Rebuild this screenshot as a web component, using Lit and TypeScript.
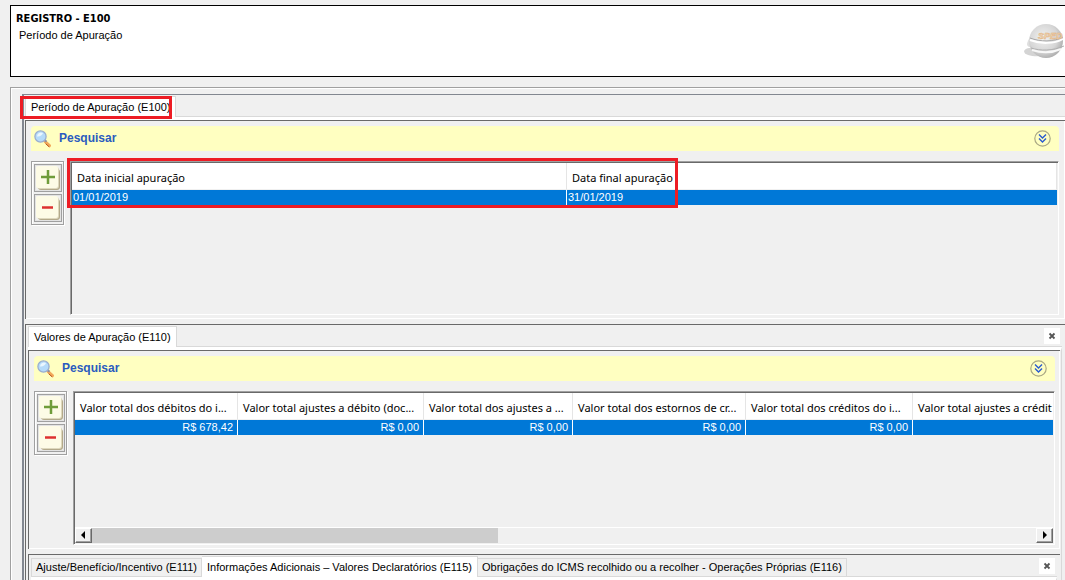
import { LitElement, html, css, svg } from "lit";
import { customElement, property } from "lit/decorators.js";

interface Column {
  title: string;
  width?: number;
}

const MAGNIFIER = html`
  <svg class="lens" viewBox="0 0 18 18" aria-hidden="true">
    <path d="M11 11.5l4.500 4.200" stroke="#f2a95a" stroke-width="3" stroke-linecap="round" />
    <path d="M12 14l3 2.700" stroke="#b9551f" stroke-width="1" stroke-linecap="round" />
    <path d="M10.500 10l2 1.800" stroke="#8a8fa0" stroke-width="2" />
    <circle cx="6.500" cy="6.500" r="5.600" fill="#b5dbfa" stroke="#9aaed0" stroke-width="1.300" />
    <path d="M3 6.500a3.800 3.800 0 0 1 6-3.200C8 5 6 7 3 6.500z" fill="#e9f6ff" />
  </svg>`;

const sharedStyles = css`
  *,
  *::before,
  *::after {
    box-sizing: border-box;
  }
  button {
    font: inherit;
    color: inherit;
    margin: 0;
    padding: 0;
    border: 0;
    background: none;
    border-radius: 0;
  }
`;

@customElement("search-bar")
export class SearchBar extends LitElement {
  static styles = [
    sharedStyles,
    css`
      :host {
        display: flex;
        align-items: center;
        justify-content: space-between;
        height: 25px;
        padding: 0 8px 0 3px;
        background: #ffffc1;
        border-radius: 4px 4px 0 0;
        color: #2a5bbf;
        font: bold 12px/13px "Liberation Sans", Arial, sans-serif;
      }
      .title {
        display: flex;
        align-items: center;
        gap: 7px;
      }
      .lens {
        width: 18px;
        height: 18px;
        fill: none;
      }
      .expand {
        width: 17px;
        height: 17px;
      }
      .expand svg {
        display: block;
        width: 17px;
        height: 17px;
        fill: none;
      }
    `,
  ];

  render() {
    return html`
      <button class="title">${MAGNIFIER}<span>Pesquisar</span></button>
      <button class="expand" aria-label="Expandir">
        <svg viewBox="0 0 17 17">
          <circle cx="8.500" cy="8.500" r="7.700" stroke="#aaa884" stroke-width="1.200" />
          <path d="M5 4.500l3.500 3.500L12 4.500M5 8.500l3.500 3.500L12 8.500" stroke="#2a5bcf" stroke-width="1.400" />
        </svg>
      </button>
    `;
  }
}

@customElement("row-tools")
export class RowTools extends LitElement {
  static styles = [
    sharedStyles,
    css`
      :host {
        display: flex;
        flex-direction: column;
        gap: 2px;
        width: 33px;
        padding: 2px;
        border: 1px solid #a0a0a0;
        box-shadow: inset 1px 1px #fff, 1px 1px #fff;
      }
      .tool {
        display: block;
        width: 28px;
        height: 28px;
        padding: 1px;
        border: 1px solid #a0a0a0;
        box-shadow: inset 0 0 0 1px #e3e3e3;
      }
      svg {
        display: block;
        width: 24px;
        height: 24px;
      }
    `,
  ];

  private tool(label: string, glyph: unknown) {
    return html`
      <button class="tool" aria-label=${label}>
        <svg viewBox="0 0 24 24">
          <rect x="2" y="3" width="22" height="21" rx="3" fill="#b3a98a" />
          <rect x="1" y="1" width="22" height="22" rx="3" fill="#ded8bd" />
          <rect x="0" y="0" width="22" height="22" rx="2" fill="#fdfbe6" />
          ${glyph}
        </svg>
      </button>
    `;
  }

  render() {
    return html`
      ${this.tool("Incluir", svg`<path d="M5 11h14M12 4v14" stroke="#6f9c3a" stroke-width="2.500" />`)}
      ${this.tool("Excluir", svg`<path d="M6 11.500h11" stroke="#dd3030" stroke-width="2.500" />`)}
    `;
  }
}

@customElement("data-grid")
export class DataGrid extends LitElement {
  @property({ attribute: false }) columns: Column[] = [];
  @property({ attribute: false }) row: string[] = [];
  @property({ type: Boolean }) numeric = false;
  @property({ type: Boolean }) scrollable = false;

  static styles = [
    sharedStyles,
    css`
      :host {
        display: flex;
        flex-direction: column;
        min-width: 0;
        height: 154px;
        border: 1px solid;
        border-color: #a0a0a0 #fff #fff #a0a0a0;
        box-shadow: inset 1px 1px #696969;
        padding: 1px;
      }
      .view {
        flex: 1;
        min-height: 0;
        overflow: hidden;
      }
      table {
        width: 100%;
        table-layout: fixed;
        border-collapse: separate;
        border-spacing: 0;
      }
      th,
      td {
        padding: 0;
        white-space: nowrap;
      }
      th {
        height: 27px;
        padding: 4px 0 0 5px;
        background: #fff;
        border-right: 1px solid #e5e5e5;
        border-bottom: 1px solid #f0f0f0;
        color: #000;
        text-align: left;
        font: 11px/16px "Noto Sans", "Segoe UI", sans-serif;
      }
      td {
        height: 15px;
        padding: 0 4px 0 1px;
        background: #0078d7;
        border-right: 1px solid #fff;
        color: #fff;
        font: 11px/15px "Liberation Sans", Arial, sans-serif;
      }
      td:last-child {
        border-right: 0;
      }
      .numeric td {
        text-align: right;
      }
      .numeric th:last-child {
        border-right: 0;
      }
      .scroll {
        display: flex;
        height: 16px;
        border-top: 1px solid #fff;
      }
      .track {
        flex: 1;
      }
      .thumb {
        width: 43%;
        height: 15px;
        background: #cdcdcd;
      }
      .arrow {
        width: 17px;
        border: 1px solid;
        border-color: #fff #696969 #696969 #fff;
        box-shadow: inset -1px -1px #a0a0a0;
      }
      .arrow svg {
        display: block;
        width: 15px;
        height: 13px;
      }
    `,
  ];

  render() {
    return html`
      <div class="view">
        <table class=${this.numeric ? "numeric" : ""}>
          <colgroup>
            ${this.columns.map((c) =>
              c.width ? html`<col style="width:${c.width}px" />` : html`<col />`
            )}
          </colgroup>
          <thead>
            <tr>${this.columns.map((c) => html`<th scope="col">${c.title}</th>`)}</tr>
          </thead>
          <tbody>
            <tr>${this.row.map((v) => html`<td>${v}</td>`)}</tr>
          </tbody>
        </table>
      </div>
      ${this.scrollable
        ? html`<div class="scroll">
            <button class="arrow" aria-label="Rolar para a esquerda">
              <svg viewBox="0 0 15 13"><path d="M9 2v8L5 6z" /></svg>
            </button>
            <div class="track"><div class="thumb"></div></div>
            <button class="arrow" aria-label="Rolar para a direita">
              <svg viewBox="0 0 15 13"><path d="M6 2v8l4-4z" /></svg>
            </button>
          </div>`
        : null}
    `;
  }
}

@customElement("app-root")
export class AppRoot extends LitElement {
  static styles = [
    sharedStyles,
    css`
      :host {
        display: flex;
        flex-direction: column;
        gap: 10px;
        height: 100vh;
        overflow: hidden;
        box-sizing: border-box;
        padding: 5px 0 0 10px;
        background: #f0f0f0;
        color: #000;
        font: 11px/13px "Liberation Sans", Arial, sans-serif;
      }
      .banner {
        display: flex;
        justify-content: space-between;
        min-height: 72px;
        padding: 5px 0 0 5px;
        background: #fff;
        border: 1px solid #000;
        border-right: 0;
      }
      h1 {
        margin: 0 0 3px;
        font: bold 11px/15px "DejaVu Sans Condensed", Tahoma, sans-serif;
      }
      .subtitle {
        margin: 0;
        padding-left: 3px;
      }
      .logo {
        width: 42px;
        height: 40px;
        margin-top: 10px;
      }
      .logo text {
        font: italic bold 9px "Liberation Sans", Arial, sans-serif;
        fill: #f3dcc0;
        stroke: #dfae78;
        stroke-width: 0.5px;
      }
      .frame {
        flex: 1;
        min-height: 0;
        padding: 6px 0 0 11px;
        border: solid #a0a0a0;
        border-width: 1px 0 0 1px;
        box-shadow: inset 1px 1px #fff;
      }
      .workspace {
        height: 100%;
        padding-left: 1px;
        border-top: 1px solid #828790;
        border-left: 2px solid #828790;
      }
      .tabs {
        display: flex;
        align-items: flex-end;
        height: 22px;
        padding-top: 1px;
        background: linear-gradient(#d9d9d9, #d9d9d9) 0 100% / 100% 1px no-repeat;
      }
      .tab {
        position: relative;
        height: 19px;
        padding: 0 4px;
        border: 1px solid #d9d9d9;
        border-left-width: 0;
        white-space: nowrap;
      }
      .tab:first-child {
        border-left-width: 1px;
      }
      .tab.active {
        height: 21px;
        padding: 0 5px;
        background: #fff;
        border-bottom: 0;
      }
      .close {
        width: 16px;
        height: 16px;
        margin: 0 2px 3px auto;
        background: #fff;
      }
      .close svg {
        display: block;
        width: 16px;
        height: 16px;
      }
      .pane {
        border-top: 3px solid #fff;
      }
      .sheet {
        padding: 5px 6px 4px 5px;
        border: solid #696969;
        border-width: 1px 0 0 1px;
        box-shadow: inset -1px -1px #fff;
      }
      .body {
        display: grid;
        grid-template-columns: 33px minmax(0, 1fr);
        column-gap: 6px;
        align-items: start;
        margin-top: 10px;
      }
      .gridwrap {
        position: relative;
      }
      .detail {
        margin-top: 5px;
        padding: 0 3px 0 2px;
        border: solid #696969;
        border-width: 1px 0 0 1px;
      }
      .detail .pane {
        padding-right: 1px;
        border-right: 1px solid #d9d9d9;
      }
      .detail .sheet {
        padding-right: 5px;
      }
      .last {
        min-height: 20px;
        background: #fff;
      }
      .mark {
        position: absolute;
        border: 3px solid #ed1c24;
        pointer-events: none;
      }
      .mark-tab {
        inset: -1px 3px -2px -6px;
      }
      .mark-grid {
        left: -3px;
        top: -3px;
        width: 611px;
        height: 50px;
      }
    `,
  ];

  private periodColumns: Column[] = [
    { title: "Data inicial apuração", width: 495 },
    { title: "Data final apuração" },
  ];

  private valueColumns: Column[] = [
    { title: "Valor total dos débitos do i...", width: 163 },
    { title: "Valor total ajustes a débito (doc...", width: 186 },
    { title: "Valor total dos ajustes a ...", width: 149 },
    { title: "Valor total dos estornos de cr...", width: 173 },
    { title: "Valor total dos créditos do i...", width: 167 },
    { title: "Valor total ajustes a crédit" },
  ];

  private closeButton() {
    return html`
      <button class="close" aria-label="Fechar">
        <svg viewBox="0 0 16 16">
          <path d="M5.500 5.500l5 5M10.500 5.500l-5 5" stroke="#555" stroke-width="1.800" />
        </svg>
      </button>
    `;
  }

  render() {
    return html`
      <header class="banner">
        <div>
          <h1>REGISTRO - E100</h1>
          <p class="subtitle">Período de Apuração</p>
        </div>
        <svg class="logo" viewBox="0 0 42 40" aria-hidden="true">
          <defs>
            <radialGradient id="ball" cx="42%" cy="40%" r="60%">
              <stop offset="0" stop-color="#f2f2f2" />
              <stop offset="0.700" stop-color="#d6d6d6" />
              <stop offset="1" stop-color="#b2b2b2" />
            </radialGradient>
          </defs>
          <path d="M1 30c2-4 9-4 14-2l10 6c-8 2-24 2-24-4z" fill="#d4d4d4" />
          <path d="M4 23c1-5 4-9 8-10l2 12c-5 2-10 2-10-2z" fill="#dedede" />
          <circle cx="23" cy="20" r="17" fill="url(#ball)" />
          <path d="M7 17c10 4 24 4 33-1" fill="none" stroke="#a8a8a8" stroke-width="1" />
          <path d="M7 19c10 4 24 4 33-1" fill="none" stroke="#fff" stroke-width="2" />
          <path d="M8 27c9 3 22 3 33-2" fill="none" stroke="#b0b0b0" stroke-width="1" />
          <path d="M9 29c9 3 20 3 29-1" fill="none" stroke="#f8f8f8" stroke-width="2" />
          <text x="15" y="18">SPED</text>
        </svg>
      </header>
      <main class="frame">
        <div class="workspace">
          <nav class="tabs">
            <button class="tab active">
              Período de Apuração (E100)<span class="mark mark-tab"></span>
            </button>
          </nav>
          <div class="pane">
            <section class="sheet">
              <search-bar></search-bar>
              <div class="body">
                <row-tools></row-tools>
                <div class="gridwrap">
                  <data-grid
                    .columns=${this.periodColumns}
                    .row=${["01/01/2019", "31/01/2019"]}
                  ></data-grid>
                  <span class="mark mark-grid"></span>
                </div>
              </div>
            </section>
          </div>
          <div class="detail">
            <nav class="tabs">
              <button class="tab active">Valores de Apuração (E110)</button>
              ${this.closeButton()}
            </nav>
            <div class="pane">
              <section class="sheet">
                <search-bar></search-bar>
                <div class="body">
                  <row-tools></row-tools>
                  <data-grid
                    numeric
                    scrollable
                    .columns=${this.valueColumns}
                    .row=${["R$ 678,42", "R$ 0,00", "R$ 0,00", "R$ 0,00", "R$ 0,00", ""]}
                  ></data-grid>
                </div>
              </section>
              <div class="detail">
                <nav class="tabs">
                  <button class="tab">Ajuste/Benefício/Incentivo (E111)</button>
                  <button class="tab active">
                    Informações Adicionais – Valores Declaratórios (E115)
                  </button>
                  <button class="tab">
                    Obrigações do ICMS recolhido ou a recolher - Operações Próprias (E116)
                  </button>
                  ${this.closeButton()}
                </nav>
                <div class="pane last"></div>
              </div>
            </div>
          </div>
        </div>
      </main>
    `;
  }
}
